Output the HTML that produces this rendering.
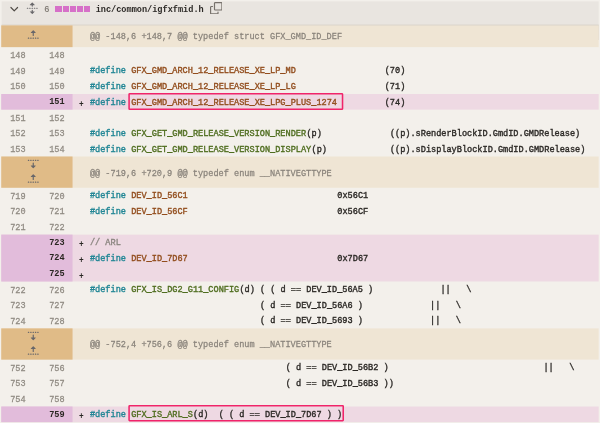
<!DOCTYPE html>
<html lang="en"><head><meta charset="utf-8"><title>inc/common/igfxfmid.h</title>
<style>
html,body{margin:0;padding:0;}
body{width:600px;height:423px;overflow:hidden;background:#f3f0eb;position:relative}
#bg,#ov{position:absolute;left:0;top:0}
#ov{z-index:4}
#w{will-change:transform;position:absolute;left:0;top:0;width:768px;height:542px;zoom:0.78125;z-index:2;
 font-family:"Liberation Mono","DejaVu Sans Mono",monospace;font-size:11.0px;letter-spacing:-0.003px;color:#2b2825;overflow:hidden}
#fh{position:absolute;left:1px;top:1.5px;width:766px;height:29.5px;}
#fh i{position:absolute;top:6.2px;width:8px;height:8px;background:#d670c8;}
#fh span{position:absolute;top:1.1px;transform:scaleY(1.1);transform-origin:0 70%;line-height:21.6px;white-space:pre}
#fn{left:121.4px;font-weight:bold;color:#2b2825;}
#cnt{left:55.6px;color:#7a756e;-webkit-text-stroke:0.2px currentColor}
.row{position:absolute;left:2px;width:766px;height:20px;line-height:20px;white-space:pre;}
.row span{position:absolute;top:2.5px;margin-left:-2px;transform:scaleY(1.1);transform-origin:0 70%;-webkit-text-stroke:0.45px currentColor}
.hunk{color:#89837b}
.hunk span{top:2.9px;-webkit-text-stroke:0.3px currentColor}
.row .n{color:#8f8a82;-webkit-text-stroke:0.3px currentColor;top:3.0px;transform:scaleY(1.14)}
.n1{left:13px} .n2{left:62.9px}
.row.add .n{color:#2a2622;font-weight:bold;-webkit-text-stroke:0;top:1.9px;transform:scaleY(1.1)}
.row .pm{top:3.9px;font-weight:bold;font-size:10px;margin-left:-1.6px;-webkit-text-stroke:0}
.k{color:#1f8594} .c{color:#924d1d} .f{color:#4f6d1f} .m{color:#8b8680}
</style></head><body>
<svg id="bg" width="600" height="423" viewBox="0 0 600 423">
<rect x="1.60" y="1.40" width="597.10" height="38.60" fill="#e9e5e0"/>
<rect x="1.60" y="24.60" width="597.10" height="15.40" fill="#d6d1c9"/>
<rect x="1.25" y="25.45" width="597.45" height="21.68" fill="#efe5d4"/>
<rect x="1.25" y="25.45" width="71.30" height="21.68" fill="#e0bb87"/>
<rect x="1.25" y="94.00" width="597.45" height="15.62" fill="#eed9e3"/>
<rect x="1.25" y="94.00" width="71.30" height="15.62" fill="#e2bcdb"/>
<rect x="1.25" y="156.50" width="597.45" height="31.25" fill="#efe5d4"/>
<rect x="1.25" y="156.50" width="71.30" height="31.25" fill="#e0bb87"/>
<rect x="1.25" y="234.62" width="597.45" height="46.88" fill="#eed9e3"/>
<rect x="1.25" y="234.62" width="71.30" height="46.88" fill="#e2bcdb"/>
<rect x="1.25" y="328.38" width="597.45" height="31.25" fill="#efe5d4"/>
<rect x="1.25" y="328.38" width="71.30" height="31.25" fill="#e0bb87"/>
<rect x="1.25" y="406.50" width="597.45" height="15.62" fill="#eed9e3"/>
<rect x="1.25" y="406.50" width="71.30" height="15.62" fill="#e2bcdb"/>
</svg>
<div id="w">
<div id="fh">
<svg style="position:absolute;left:9.4px;top:2.9px" width="16" height="16" viewBox="0 0 16 16"><path fill="#4f4a45" d="M12.78 5.22a.749.749 0 0 1 0 1.06l-4.25 4.25a.749.749 0 0 1-1.06 0L3.22 6.28a.749.749 0 1 1 1.06-1.06L8 8.939l3.72-3.719a.749.749 0 0 1 1.06 0Z"/></svg>
<svg style="position:absolute;left:32.5px;top:1.1px" width="16" height="16" viewBox="0 0 16 16"><path fill="#68676a" d="m8.177.677 2.896 2.896a.25.25 0 0 1-.177.427H8.75v1.25a.75.75 0 0 1-1.5 0V4H5.104a.25.25 0 0 1-.177-.427L7.823.677a.25.25 0 0 1 .354 0ZM7.25 10.75a.75.75 0 0 1 1.5 0V12h2.146a.25.25 0 0 1 .177.427l-2.896 2.896a.25.25 0 0 1-.354 0l-2.896-2.896A.25.25 0 0 1 5.104 12H7.25v-1.25Zm-5-2a.75.75 0 0 0 0-1.5h-.5a.75.75 0 0 0 0 1.5h.5ZM6 8a.75.75 0 0 1-.75.75h-.5a.75.75 0 0 1 0-1.5h.5A.75.75 0 0 1 6 8Zm2.25.75a.75.75 0 0 0 0-1.5h-.5a.75.75 0 0 0 0 1.5h.5ZM12 8a.75.75 0 0 1-.75.75h-.5a.75.75 0 0 1 0-1.5h.5A.75.75 0 0 1 12 8Zm2.25.75a.75.75 0 0 0 0-1.5h-.5a.75.75 0 0 0 0 1.5h.5Z"/></svg>
<span id="cnt">6</span><i style="left:70px"></i><i style="left:79px"></i><i style="left:88px"></i><i style="left:97px"></i><i style="left:106px"></i>
<span id="fn">inc/common/igfxfmid.h</span>
<svg style="position:absolute;left:267.5px;top:0.9px" width="16" height="16" viewBox="0 0 16 16"><path fill="#77716b" d="M0 6.75C0 5.784.784 5 1.75 5h1.5a.75.75 0 0 1 0 1.5h-1.5a.25.25 0 0 0-.25.25v7.5c0 .138.112.25.25.25h7.5a.25.25 0 0 0 .25-.25v-1.5a.75.75 0 0 1 1.5 0v1.5A1.75 1.75 0 0 1 9.25 16h-7.5A1.75 1.75 0 0 1 0 14.25ZM5 1.75C5 .784 5.784 0 6.75 0h7.5C15.216 0 16 .784 16 1.75v7.5A1.75 1.75 0 0 1 14.25 11h-7.5A1.75 1.75 0 0 1 5 9.25Zm1.75-.25a.25.25 0 0 0-.25.25v7.5c0 .138.112.25.25.25h7.5a.25.25 0 0 0 .25-.25v-7.5a.25.25 0 0 0-.25-.25Z"/></svg>
</div>
<div class="row hunk" style="top:32px;height:28px;line-height:28px"><svg style="position:absolute;left:32.2px;top:5.3px" width="16" height="16" viewBox="0 0 16 16"><path fill="#68676a" d="M7.823 1.677 4.927 4.573A.25.25 0 0 0 5.104 5H7.25v3.236a.75.75 0 1 0 1.5 0V5h2.146a.25.25 0 0 0 .177-.427L8.177 1.677a.25.25 0 0 0-.354 0ZM13.75 11a.75.75 0 0 0 0 1.5h.5a.75.75 0 0 0 0-1.5h-.5Zm-3.75.75a.75.75 0 0 1 .75-.75h.5a.75.75 0 0 1 0 1.5h-.5a.75.75 0 0 1-.75-.75ZM7.75 11a.75.75 0 0 0 0 1.5h.5a.75.75 0 0 0 0-1.5h-.5ZM4 11.75a.75.75 0 0 1 .75-.75h.5a.75.75 0 0 1 0 1.5h-.5a.75.75 0 0 1-.75-.75ZM1.75 11a.75.75 0 0 0 0 1.5h.5a.75.75 0 0 0 0-1.5h-.5Z"/></svg><span class="ht" style="left:115.10px">@@ -148,6 +148,7 @@ typedef struct GFX_GMD_ID_DEF</span></div>
<div class="row ctx" style="top:60px"><span class="n n1">148</span><span class="n n2">148</span></div>
<div class="row ctx" style="top:80px"><span class="n n1">149</span><span class="n n2">149</span><span class="k" style="left:115.10px">#define</span><span class="c" style="left:167.88px">GFX_GMD_ARCH_12_RELEASE_XE_LP_MD</span><span style="left:492.45px">(70)</span></div>
<div class="row ctx" style="top:100px"><span class="n n1">150</span><span class="n n2">150</span><span class="k" style="left:115.10px">#define</span><span class="c" style="left:167.88px">GFX_GMD_ARCH_12_RELEASE_XE_LP_LG</span><span style="left:492.45px">(71)</span></div>
<div class="row add" style="top:120px"><span class="n n2">151</span><span class="pm" style="left:100.71px">+</span><span class="k" style="left:115.10px">#define</span><span class="c" style="left:167.88px">GFX_GMD_ARCH_12_RELEASE_XE_LPG_PLUS_1274</span><span style="left:492.45px">(74)</span></div>
<div class="row ctx" style="top:140px"><span class="n n1">151</span><span class="n n2">152</span></div>
<div class="row ctx" style="top:160px"><span class="n n1">152</span><span class="n n2">153</span><span class="k" style="left:115.10px">#define</span><span class="f" style="left:167.88px">GFX_GET_GMD_RELEASE_VERSION_RENDER</span><span style="left:392.17px">(p)</span><span style="left:499.05px">((p).sRenderBlockID.GmdID.GMDRelease)</span></div>
<div class="row ctx" style="top:180px"><span class="n n1">153</span><span class="n n2">154</span><span class="k" style="left:115.10px">#define</span><span class="f" style="left:167.88px">GFX_GET_GMD_RELEASE_VERSION_DISPLAY</span><span style="left:398.77px">(p)</span><span style="left:499.05px">((p).sDisplayBlockID.GmdID.GMDRelease)</span></div>
<div class="row hunk" style="top:200px;height:40px;line-height:40px"><svg style="position:absolute;left:32.2px;top:1.0px" width="16" height="16" viewBox="0 0 16 16"><path fill="#68676a" d="m8.177 14.323 2.896-2.896a.25.25 0 0 0-.177-.427H8.75V7.764a.75.75 0 1 0-1.5 0V11H5.104a.25.25 0 0 0-.177.427l2.896 2.896a.25.25 0 0 0 .354 0ZM2.25 5a.75.75 0 0 0 0-1.5h-.5a.75.75 0 0 0 0 1.5h.5ZM6 4.25a.75.75 0 0 1-.75.75h-.5a.75.75 0 0 1 0-1.5h.5a.75.75 0 0 1 .75.75ZM8.25 5a.75.75 0 0 0 0-1.5h-.5a.75.75 0 0 0 0 1.5h.5ZM12 4.25a.75.75 0 0 1-.75.75h-.5a.75.75 0 0 1 0-1.5h.5a.75.75 0 0 1 .75.75Zm2.25.75a.75.75 0 0 0 0-1.5h-.5a.75.75 0 0 0 0 1.5h.5Z"/></svg><svg style="position:absolute;left:32.2px;top:21.2px" width="16" height="16" viewBox="0 0 16 16"><path fill="#68676a" d="M7.823 1.677 4.927 4.573A.25.25 0 0 0 5.104 5H7.25v3.236a.75.75 0 1 0 1.5 0V5h2.146a.25.25 0 0 0 .177-.427L8.177 1.677a.25.25 0 0 0-.354 0ZM13.75 11a.75.75 0 0 0 0 1.5h.5a.75.75 0 0 0 0-1.5h-.5Zm-3.75.75a.75.75 0 0 1 .75-.75h.5a.75.75 0 0 1 0 1.5h-.5a.75.75 0 0 1-.75-.75ZM7.75 11a.75.75 0 0 0 0 1.5h.5a.75.75 0 0 0 0-1.5h-.5ZM4 11.75a.75.75 0 0 1 .75-.75h.5a.75.75 0 0 1 0 1.5h-.5a.75.75 0 0 1-.75-.75ZM1.75 11a.75.75 0 0 0 0 1.5h.5a.75.75 0 0 0 0-1.5h-.5Z"/></svg><span class="ht" style="left:115.10px">@@ -719,6 +720,9 @@ typedef enum __NATIVEGTTYPE</span></div>
<div class="row ctx" style="top:240px"><span class="n n1">719</span><span class="n n2">720</span><span class="k" style="left:115.10px">#define</span><span class="c" style="left:167.88px">DEV_ID_56C1</span><span style="left:431.76px">0x56C1</span></div>
<div class="row ctx" style="top:260px"><span class="n n1">720</span><span class="n n2">721</span><span class="k" style="left:115.10px">#define</span><span class="c" style="left:167.88px">DEV_ID_56CF</span><span style="left:431.76px">0x56CF</span></div>
<div class="row ctx" style="top:280px"><span class="n n1">721</span><span class="n n2">722</span></div>
<div class="row add" style="top:300px"><span class="n n2">723</span><span class="pm" style="left:100.71px">+</span><span class="m" style="left:115.10px">// ARL</span></div>
<div class="row add" style="top:320px"><span class="n n2">724</span><span class="pm" style="left:100.71px">+</span><span class="k" style="left:115.10px">#define</span><span class="c" style="left:167.88px">DEV_ID_7D67</span><span style="left:431.76px">0x7D67</span></div>
<div class="row add" style="top:340px"><span class="n n2">725</span><span class="pm" style="left:100.71px">+</span></div>
<div class="row ctx" style="top:360px"><span class="n n1">722</span><span class="n n2">726</span><span class="k" style="left:115.10px">#define</span><span class="f" style="left:167.88px">GFX_IS_DG2_G11_CONFIG</span><span style="left:306.41px">(d) ( ( d == DEV_ID_56A5 )</span><span style="left:563.70px">||</span><span style="left:596.68px">\</span></div>
<div class="row ctx" style="top:380px"><span class="n n1">723</span><span class="n n2">727</span><span style="left:332.80px">( d == DEV_ID_56A6 )</span><span style="left:550.50px">||</span><span style="left:583.49px">\</span></div>
<div class="row ctx" style="top:400px"><span class="n n1">724</span><span class="n n2">728</span><span style="left:332.80px">( d == DEV_ID_5693 )</span><span style="left:550.50px">||</span><span style="left:583.49px">\</span></div>
<div class="row hunk" style="top:420px;height:40px;line-height:40px"><svg style="position:absolute;left:32.2px;top:1.0px" width="16" height="16" viewBox="0 0 16 16"><path fill="#68676a" d="m8.177 14.323 2.896-2.896a.25.25 0 0 0-.177-.427H8.75V7.764a.75.75 0 1 0-1.5 0V11H5.104a.25.25 0 0 0-.177.427l2.896 2.896a.25.25 0 0 0 .354 0ZM2.25 5a.75.75 0 0 0 0-1.5h-.5a.75.75 0 0 0 0 1.5h.5ZM6 4.25a.75.75 0 0 1-.75.75h-.5a.75.75 0 0 1 0-1.5h.5a.75.75 0 0 1 .75.75ZM8.25 5a.75.75 0 0 0 0-1.5h-.5a.75.75 0 0 0 0 1.5h.5ZM12 4.25a.75.75 0 0 1-.75.75h-.5a.75.75 0 0 1 0-1.5h.5a.75.75 0 0 1 .75.75Zm2.25.75a.75.75 0 0 0 0-1.5h-.5a.75.75 0 0 0 0 1.5h.5Z"/></svg><svg style="position:absolute;left:32.2px;top:21.2px" width="16" height="16" viewBox="0 0 16 16"><path fill="#68676a" d="M7.823 1.677 4.927 4.573A.25.25 0 0 0 5.104 5H7.25v3.236a.75.75 0 1 0 1.5 0V5h2.146a.25.25 0 0 0 .177-.427L8.177 1.677a.25.25 0 0 0-.354 0ZM13.75 11a.75.75 0 0 0 0 1.5h.5a.75.75 0 0 0 0-1.5h-.5Zm-3.75.75a.75.75 0 0 1 .75-.75h.5a.75.75 0 0 1 0 1.5h-.5a.75.75 0 0 1-.75-.75ZM7.75 11a.75.75 0 0 0 0 1.5h.5a.75.75 0 0 0 0-1.5h-.5ZM4 11.75a.75.75 0 0 1 .75-.75h.5a.75.75 0 0 1 0 1.5h-.5a.75.75 0 0 1-.75-.75ZM1.75 11a.75.75 0 0 0 0 1.5h.5a.75.75 0 0 0 0-1.5h-.5Z"/></svg><span class="ht" style="left:115.10px">@@ -752,4 +756,6 @@ typedef enum __NATIVEGTTYPE</span></div>
<div class="row ctx" style="top:460px"><span class="n n1">752</span><span class="n n2">756</span><span style="left:365.79px">( d == DEV_ID_56B2 )</span><span style="left:695.64px">||</span><span style="left:728.62px">\</span></div>
<div class="row ctx" style="top:480px"><span class="n n1">753</span><span class="n n2">757</span><span style="left:365.79px">( d == DEV_ID_56B3 ))</span></div>
<div class="row ctx" style="top:500px"><span class="n n1">754</span><span class="n n2">758</span></div>
<div class="row add" style="top:520px"><span class="n n2">759</span><span class="pm" style="left:100.71px">+</span><span class="k" style="left:115.10px">#define</span><span class="f" style="left:167.88px">GFX_IS_ARL_S</span><span style="left:247.04px">(d)  ( ( d == DEV_ID_7D67 ) )</span></div>
<div class="row ctx" style="top:540px"><span class="n n1"></span><span class="n n2"></span></div>
</div>
<svg id="ov" width="600" height="423" viewBox="0 0 600 423"><rect x="129.08" y="93.68" width="213.45" height="15.55" rx="0.6" fill="none" stroke="#f0246a" stroke-width="1.55"/><rect x="129.08" y="405.67" width="214.15" height="15.05" rx="0.6" fill="none" stroke="#f0246a" stroke-width="1.55"/></svg>
</body></html>
